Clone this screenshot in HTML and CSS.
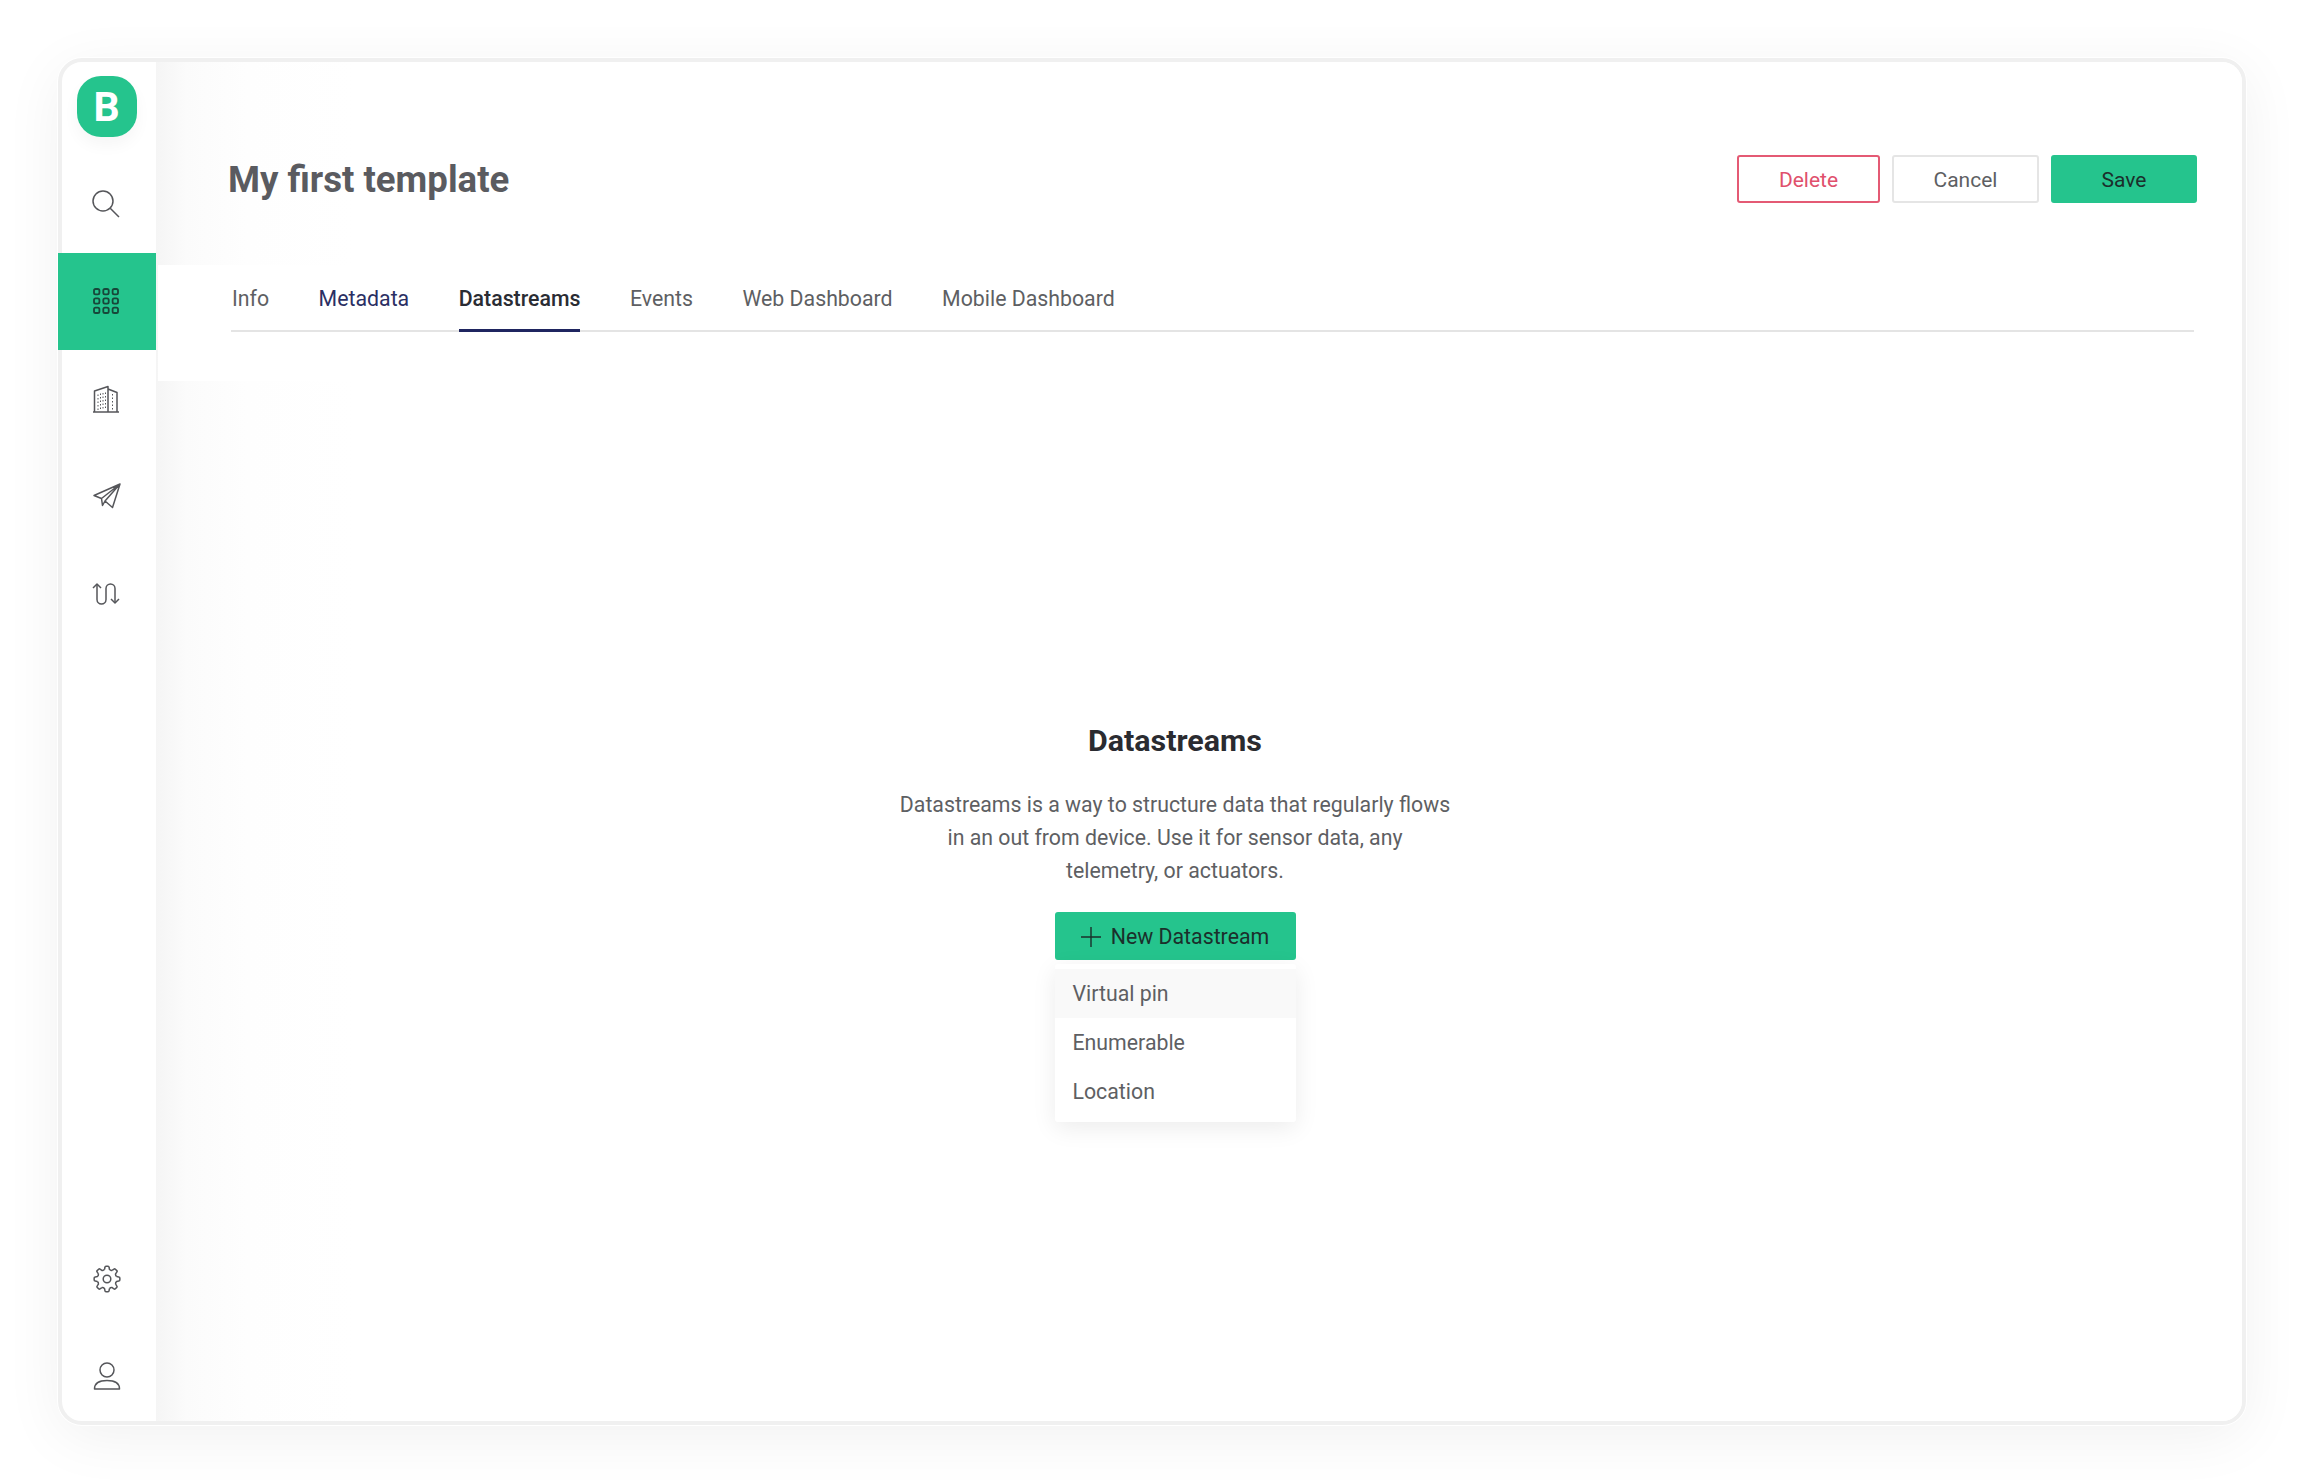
FILE: index.html
```html
<!DOCTYPE html>
<html>

<head>
    <meta charset="utf-8">
    <title>My first template</title>
    <link rel="stylesheet" href="styles.css">
</head>

<body>
    <div class="window">
        <nav class="sidebar">
            <div class="logo">B</div>

            <a class="navItem">
                <svg width="28" height="28" viewBox="0 0 28 28">
                    <circle cx="11" cy="11" r="10" />
                    <path d="M18.2 18.2 L27 27" />
                </svg>
            </a>
            <a class="navItem active">
                <svg width="28" height="28" viewBox="0 0 28 28">
                    <rect x="2" y="2" width="5.4" height="5.4" rx="1.6" />
                    <rect x="11.3" y="2" width="5.4" height="5.4" rx="1.6" />
                    <rect x="20.6" y="2" width="5.4" height="5.4" rx="1.6" />
                    <rect x="2" y="11.3" width="5.4" height="5.4" rx="1.6" />
                    <rect x="11.3" y="11.3" width="5.4" height="5.4" rx="1.6" />
                    <rect x="20.6" y="11.3" width="5.4" height="5.4" rx="1.6" />
                    <rect x="2" y="20.6" width="5.4" height="5.4" rx="1.6" />
                    <rect x="11.3" y="20.6" width="5.4" height="5.4" rx="1.6" />
                    <rect x="20.6" y="20.6" width="5.4" height="5.4" rx="1.6" />
                </svg>
            </a>
            <a class="navItem">
                <svg width="28" height="28" viewBox="0 0 28 28">
                    <path d="M1 27 H27 M2.500 27 V6 L16 1.500 V27 M16 4 L25 7.500 V27" />
                    <path class="dots" d="M6 9.500 V25 M8.500 8.500 V25 M11 8 V25 M13.500 7.500 V25 M20.500 9 V25" />
                </svg>
            </a>
            <a class="navItem plane">
                <svg width="28" height="28" viewBox="0 0 28 28">
                    <path d="M27 2 L1 13.500 L8.500 16.500 L27 2 L19.500 25.500 L12 19 L27 2 M8.500 16.500 L9.500 23.500 L12 19" />
                </svg>
            </a>
            <a class="navItem">
                <svg width="28" height="28" viewBox="0 0 28 28">
                    <path d="M5 4 V19.500 a4.500 4.500 0 0 0 9 0 V8.500 a4.500 4.500 0 0 1 9 0 V23" />
                    <path d="M1 8 L5 4 L9 8 M19 19 L23 23 L27 19" />
                </svg>
            </a>

            <a class="navItem gear">
                <svg width="28" height="28" viewBox="0 0 28 28">
                    <circle cx="14" cy="14" r="3.8" />
                    <path d="M11.58 4.3 L11.97 2.2 Q12 1.16 13 1.16 H15 Q16 1.16 16.03 2.2 L16.42 4.3 Q17.44 5.69 19.15 5.43" />
                    <path transform="rotate(45 14 14)" d="M11.58 4.3 L11.97 2.2 Q12 1.16 13 1.16 H15 Q16 1.16 16.03 2.2 L16.42 4.3 Q17.44 5.69 19.15 5.43" />
                    <path transform="rotate(90 14 14)" d="M11.58 4.3 L11.97 2.2 Q12 1.16 13 1.16 H15 Q16 1.16 16.03 2.2 L16.42 4.3 Q17.44 5.69 19.15 5.43" />
                    <path transform="rotate(135 14 14)" d="M11.58 4.3 L11.97 2.2 Q12 1.16 13 1.16 H15 Q16 1.16 16.03 2.2 L16.42 4.3 Q17.44 5.69 19.15 5.43" />
                    <path transform="rotate(180 14 14)" d="M11.58 4.3 L11.97 2.2 Q12 1.16 13 1.16 H15 Q16 1.16 16.03 2.2 L16.42 4.3 Q17.44 5.69 19.15 5.43" />
                    <path transform="rotate(225 14 14)" d="M11.58 4.3 L11.97 2.2 Q12 1.16 13 1.16 H15 Q16 1.16 16.03 2.2 L16.42 4.3 Q17.44 5.69 19.15 5.43" />
                    <path transform="rotate(270 14 14)" d="M11.58 4.3 L11.97 2.2 Q12 1.16 13 1.16 H15 Q16 1.16 16.03 2.2 L16.42 4.3 Q17.44 5.69 19.15 5.43" />
                    <path transform="rotate(315 14 14)" d="M11.58 4.3 L11.97 2.2 Q12 1.16 13 1.16 H15 Q16 1.16 16.03 2.2 L16.42 4.3 Q17.44 5.69 19.15 5.43" />
                </svg>
            </a>
            <a class="navItem user">
                <svg width="28" height="28" viewBox="0 0 28 28">
                    <circle cx="14" cy="8" r="7" />
                    <path d="M1.500 27 C1.500 21 7 18.500 14 18.500 S26.500 21 26.500 27 Z" />
                </svg>
            </a>
        </nav>

        <main class="main">
            <header class="header">
                <h1 class="title">My first template</h1>
                <div class="actions">
                    <button class="btn btnDelete">Delete</button>
                    <button class="btn btnCancel">Cancel</button>
                    <button class="btn btnSave">Save</button>
                </div>
            </header>

            <div class="tabsWrap">
                <div class="tabs">
                    <a class="tab">Info</a>
                    <a class="tab visited">Metadata</a>
                    <a class="tab current">Datastreams</a>
                    <a class="tab">Events</a>
                    <a class="tab">Web Dashboard</a>
                    <a class="tab">Mobile Dashboard</a>
                </div>
            </div>

            <section class="empty">
                <h2 class="emptyTitle">Datastreams</h2>
                <p class="emptyText">Datastreams is a way to structure data that regularly flows in an out from device. Use it for sensor data, any telemetry, or actuators.</p>
                <button class="btn btnSave btnNew">
                    <svg width="20" height="20" viewBox="0 0 20 20">
                        <path d="M10 0 V20 M0 10 H20" />
                    </svg>
                    New Datastream
                </button>
                <div class="menu">
                    <div class="menuItem hover">Virtual pin</div>
                    <div class="menuItem">Enumerable</div>
                    <div class="menuItem">Location</div>
                </div>
            </section>
        </main>
    </div>
</body>

</html>
```

FILE: styles.css
```css
html,
body {
    height: 100%;
    margin: 0;
}

body {
    box-sizing: border-box;
    padding: 58px 58px 58px 58px;
    background: #fff;
    font-family: "Roboto", sans-serif;
    color: #5e5f63;
}

.window {
    box-sizing: border-box;
    display: flex;
    height: 1367px;
    border: 4px solid #f0f0f0;
    border-radius: 24px;
    background: #fff;
    box-shadow: 0 0 0 1px #fff, 0 12px 60px rgba(0, 0, 0, 0.06);
}

/* sidebar sits over the left border so the green row can touch the edge */
.sidebar {
    flex: none;
    display: flex;
    flex-direction: column;
    align-items: center;
    width: 98px;
    margin-left: -4px;
}

.logo {
    flex: none;
    width: 60px;
    height: 61px;
    margin-top: 14px;
    margin-bottom: 18px;
    margin-right: 1px;
    border-radius: 24px;
    background: #25c48d;
    box-shadow: 0 8px 16px rgba(0, 0, 0, 0.04);
    color: #fff;
    font-size: 41px;
    font-weight: 700;
    line-height: 63px;
    text-align: center;
}

.navItem {
    flex: none;
    display: flex;
    justify-content: center;
    align-items: center;
    width: 100%;
    height: 97.500px;
}

.navItem svg {
    margin-right: 2px;
    fill: none;
    stroke: #55565a;
    stroke-width: 1.500;
    stroke-linejoin: round;
}

.plane svg,
.gear svg,
.user svg {
    margin-right: 0;
}

.active {
    background: #25c48d;
}

.active svg {
    stroke: #17473a;
    stroke-width: 1.800;
}

.dots {
    stroke-dasharray: 1.500 2;
    stroke-width: 1;
}

.gear {
    margin-top: auto;
    margin-bottom: 3px;
}

.user {
    height: 90px;
}

.main {
    flex: 1;
    min-width: 0;
    border-radius: 0 20px 20px 0;
    background: linear-gradient(90deg, #f5f5f5, #fbfbfb 30px, #fefefe 90px, #fff 200px);
}

.header {
    display: flex;
    justify-content: space-between;
    align-items: center;
    padding: 93px 45px 62px 72px;
}

.title {
    margin: 2px 0 0;
    font-size: 36.600px;
    font-weight: 700;
    line-height: 46px;
    color: #5a5b60;
}

.actions {
    display: flex;
    gap: 12px;
}

.btn {
    box-sizing: border-box;
    width: 146px;
    height: 48px;
    padding-top: 2px;
    border: 2px solid transparent;
    border-radius: 3px;
    background: none;
    font-family: "Roboto", sans-serif;
    font-size: 21px;
}

.btnDelete {
    width: 143px;
    border-color: #e45a74;
    color: #e0506c;
}

.btnCancel {
    width: 147px;
    border-color: #e5e5e5;
    color: #5e5f63;
}

.btnSave {
    border-color: #25c48d;
    background: #25c48d;
    color: #1b2f2b;
}

/* white strip hides the sidebar shade behind the tabs */
.tabsWrap {
    margin-left: 2px;
    padding: 22px 48px 49px 73px;
    background: #fff;
}

.tabs {
    display: flex;
    gap: 49.500px;
    height: 43px;
    padding-left: 1px;
    border-bottom: 2px solid #e4e4e4;
    font-size: 21.300px;
    line-height: 24px;
}

.tab {
    height: 42px;
}

.visited {
    color: #2b2f63;
}

.current {
    border-bottom: 3px solid #1f2560;
    color: #2a2c33;
    font-weight: 500;
}

.empty {
    display: flex;
    flex-direction: column;
    align-items: center;
    width: 560px;
    margin-left: 739px;
    padding-top: 339px;
}

.emptyTitle {
    margin: 0;
    color: #2a2b30;
    font-size: 30.400px;
    font-weight: 700;
    line-height: 42px;
}

.emptyText {
    width: 552px;
    margin: 26px 0 0;
    font-size: 21.300px;
    line-height: 33px;
    text-align: center;
}

.btnNew {
    display: flex;
    justify-content: center;
    align-items: center;
    gap: 10px;
    width: 241px;
    margin-top: 25px;
    font-size: 21.300px;
}

.btnNew svg {
    fill: none;
    stroke: #1b2f2b;
    stroke-width: 1.400;
}

.menu {
    box-sizing: border-box;
    width: 241px;
    margin-top: 4px;
    padding: 5px 0 6px;
    border-radius: 3px;
    background: #fff;
    box-shadow: 0 6px 24px rgba(0, 0, 0, 0.08);
    font-size: 21.300px;
}

.menuItem {
    height: 49px;
    padding-left: 18px;
    line-height: 49px;
}

.hover {
    background: #f9f9f9;
}
```
